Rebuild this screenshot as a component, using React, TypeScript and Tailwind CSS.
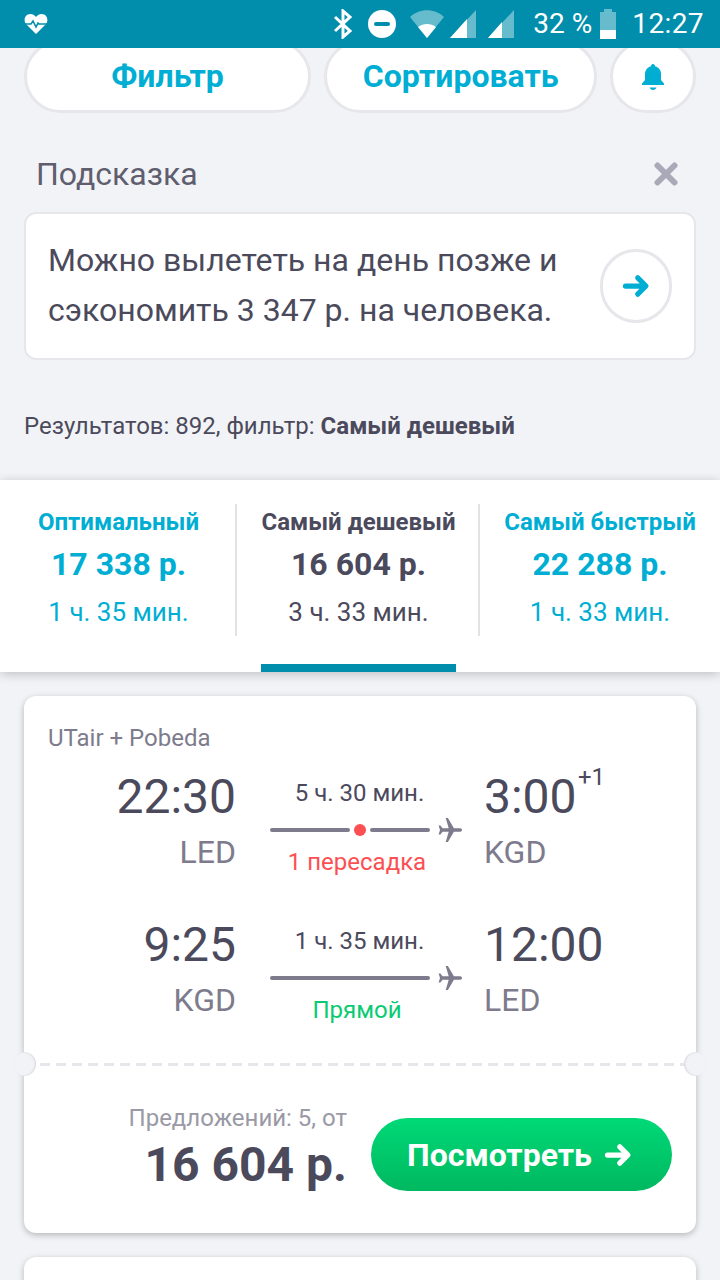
import { FC } from "react";

const Arrow: FC<{ className: string }> = ({ className }) => (
  <svg viewBox="0 0 24 24" className={className} fill="none" stroke="currentColor" strokeWidth="4.5" strokeLinecap="round" strokeLinejoin="round">
    <path d="M3 12h17M13.500 5l7 7-7 7" />
  </svg>
);

const Plane = () => (
  <svg viewBox="0 0 24 24" className="w-6 h-6 shrink-0 text-[#7d7b8c]" fill="currentColor">
    <path d="M24 12c0-1-.9-1.700-1.800-1.700h-6.300L9.900 0H7.700l3 10.300H4.600L2.400 7.600H.6L2 12 .6 16.400h1.800l2.200-2.700h6.100l-3 10.300h2.200l6-10.300h6.300c.9 0 1.800-.7 1.800-1.700z" />
  </svg>
);

function StatusBar() {
  return (
    <div className="h-12 shrink-0 bg-[#008eac] flex items-center pl-6 pr-4 text-white relative z-10">
      <svg viewBox="0 0 24 22" className="w-6 h-[22px]">
        <path fill="#fff" d="M12 21 2 11C-1 7 1 1 6.500 1 9 1 11 2.500 12 4c1-1.500 3-3 5.500-3C23 1 25 7 22 11z" />
        <path fill="none" stroke="#008eac" strokeWidth="1.600" d="M1 11h6l2-3 3 6 2-4 1 1h8" />
      </svg>
      <div className="ml-auto flex items-center">
        <svg viewBox="0 0 20 30" className="w-5 h-[30px]" fill="none" stroke="#fff" strokeWidth="3">
          <path d="M2 8l15 14-7 6V2l7 6L2 22" />
        </svg>
        <div className="ml-[15px] w-7 h-7 rounded-full bg-white flex items-center justify-center">
          <div className="w-4 h-1 rounded-full bg-[#008eac]" />
        </div>
        <svg viewBox="0 0 34 28" className="ml-[14px] w-[34px] h-7">
          <path fill="#66bbcd" d="M0 7C9-2 25-2 34 7L17 28z" />
          <path fill="#fff" d="M8 17c5-4 13-4 18 0l-9 11z" />
        </svg>
        <svg viewBox="0 0 26 28" className="ml-[6px] w-[26px] h-7">
          <path fill="#66bbcd" d="M26 0v28H0z" />
          <path fill="#fff" d="M17 9v19H0z" />
        </svg>
        <svg viewBox="0 0 26 28" className="ml-3 w-[26px] h-7">
          <path fill="#66bbcd" d="M26 0v28H0z" />
          <path fill="#fff" d="M14 12v16H0z" />
        </svg>
        <span className="ml-[19px] text-[28px] leading-none">32 %</span>
        <div className="ml-2 w-4 h-[30px] flex flex-col items-center">
          <div className="w-2 h-[3px] bg-[#66bbcd]" />
          <div className="w-4 h-[18px] bg-[#66bbcd]" />
          <div className="w-4 h-[9px] bg-white" />
        </div>
        <span className="ml-4 text-[28px] leading-none tracking-[0.4px]">12:27</span>
      </div>
    </div>
  );
}

function Tab({ title, price, time, active }: { title: string; price: string; time: string; active?: boolean }) {
  return (
    <div className={`flex-1 flex flex-col items-center ${active ? "text-[#4b4a5c]" : "text-[#00aed4]"}`}>
      <span className="text-[24px] leading-[36px] font-bold whitespace-nowrap">{title}</span>
      <span className="text-[32px] leading-[48px] font-bold whitespace-nowrap">{price}</span>
      <span className="mt-[6px] text-[26px] leading-[36px] whitespace-nowrap">{time}</span>
    </div>
  );
}

function Leg({ dep, depCode, arr, arrCode, dur, plus, stops, stopsClass, dot }: {
  dep: string; depCode: string; arr: string; arrCode: string; dur: string; plus?: string; stops: string; stopsClass: string; dot?: boolean;
}) {
  return (
    <div className="flex h-[112px]">
      <div className="w-[188px] flex flex-col items-end">
        <span className="text-[48px] leading-[60px] text-[#4b4a5c]">{dep}</span>
        <span className="mt-[1px] text-[32px] leading-[48px] text-[#7d7b8c]">{depCode}</span>
      </div>
      <div className="ml-[34px] w-[194px] flex flex-col">
        <span className="w-[179px] mt-[10px] text-center text-[24px] leading-[32px] text-[#4b4a5c]">{dur}</span>
        <div className="flex items-center mt-[8px] h-[26px]">
          <div className="w-[160px] flex items-center">
            {dot ? (
              <>
                <div className="w-[80px] h-1 rounded-full bg-[#7d7b8c]" />
                <div className="mx-[4px] w-3 h-3 rounded-full bg-[#fb4f53]" />
                <div className="w-[60px] h-1 rounded-full bg-[#7d7b8c]" />
              </>
            ) : (
              <div className="w-full h-1 rounded-full bg-[#7d7b8c]" />
            )}
          </div>
          <div className="ml-[8px]"><Plane /></div>
        </div>
        <span className={`w-[174px] mt-[3px] text-center text-[24px] leading-[32px] whitespace-nowrap ${stopsClass}`}>{stops}</span>
      </div>
      <div className="ml-5 flex flex-col items-start relative">
        <span className="text-[48px] leading-[60px] text-[#4b4a5c]">{arr}</span>
        {plus && <span className="absolute left-[94px] top-[-6px] text-[24px] leading-[32px] text-[#4b4a5c]">{plus}</span>}
        <span className="mt-[1px] text-[32px] leading-[48px] text-[#7d7b8c]">{arrCode}</span>
      </div>
    </div>
  );
}

export default function App() {
  return (
    <div className="w-[720px] h-[1280px] overflow-hidden bg-[#f2f3f6] flex flex-col font-['Roboto',sans-serif]">
      <StatusBar />

      <div className="flex mx-6 gap-[13px] -mt-[8px] h-[73px] shrink-0 text-[#00aed4] text-[32px] font-bold">
        <div className="w-[288px] pb-[2px] bg-white rounded-full border-[3px] border-[#e6e6eb] flex items-center justify-center">Фильтр</div>
        <div className="w-[274px] pb-[2px] bg-white rounded-full border-[3px] border-[#e6e6eb] flex items-center justify-center">Сортировать</div>
        <div className="w-[86px] bg-white rounded-full border-[3px] border-[#e6e6eb] flex items-center justify-center">
          <svg viewBox="0 0 24 28" className="w-6 h-7" fill="currentColor">
            <path d="M12 1c1.300 0 2 1 2 2.200C18 4.200 20 7.500 20 11v6l3 3.500V22H1v-1.500L4 17v-6c0-3.500 2-6.800 6-7.800C10 2 10.700 1 12 1z" />
            <path d="M8.500 24.500h7C15 26 13.500 27 12 27s-3-1-3.500-2.500z" />
          </svg>
        </div>
      </div>

      <div className="mt-[41px] ml-[36px] mr-[42px] flex items-center justify-between h-10 shrink-0">
        <span className="text-[32px] text-[#5f5e6e]">Подсказка</span>
        <svg viewBox="0 0 24 24" className="w-6 h-6 text-[#aaa9b7]" fill="none" stroke="currentColor" strokeWidth="6" strokeLinecap="round">
          <path d="M3.500 3.500l17 17M20.500 3.500l-17 17" />
        </svg>
      </div>

      <div className="mt-[18px] mx-6 h-[148px] shrink-0 bg-white rounded-[12px] border-2 border-[#e6e6eb] px-[22px] flex items-center justify-between">
        <p className="pb-[3px] text-[32px] leading-[50px] text-[#4b4a5c] whitespace-nowrap">
          Можно вылететь на день позже и
          <br />
          сэкономить 3 347 р. на человека.
        </p>
        <div className="w-[72px] h-[74px] rounded-full border-[3px] border-[#e6e6eb] flex items-center justify-center text-[#00aed4]">
          <Arrow className="w-7 h-7" />
        </div>
      </div>

      <p className="mt-[50px] ml-6 text-[24px] leading-[32px] text-[#4b4a5c] whitespace-nowrap shrink-0">
        Результатов: 892, фильтр: <b>Самый дешевый</b>
      </p>

      <div className="mt-[38px] h-[192px] shrink-0 bg-white shadow-[0_2px_10px_rgba(0,0,0,0.22)] relative pt-[24px] flex">
        <div className="w-[237px] h-[132px] pl-[2px] border-r-2 border-[#e2e2e6] flex"><Tab title="Оптимальный" price="17 338 р." time="1 ч. 35 мин." /></div>
        <div className="w-[243px] h-[132px] pl-[2px] border-r-2 border-[#e2e2e6] flex"><Tab title="Самый дешевый" price="16 604 р." time="3 ч. 33 мин." active /></div>
        <div className="w-[240px] h-[132px] flex"><Tab title="Самый быстрый" price="22 288 р." time="1 ч. 33 мин." /></div>
        <div className="absolute left-[261px] bottom-0 w-[195px] h-2 bg-[#008eac]" />
      </div>

      <div className="mt-6 mx-6 h-[537px] shrink-0 bg-white rounded-[12px] shadow-[0_2px_6px_rgba(0,0,0,0.25)] flex flex-col">
        <div className="h-[367px] shrink-0 flex flex-col">
          <span className="mt-6 ml-6 text-[24px] leading-[36px] text-[#7d7b8c]">UTair + Pobeda</span>
          <div className="mt-[11px] ml-[24px] flex flex-col gap-[36px]">
            <Leg dep="22:30" depCode="LED" arr="3:00" arrCode="KGD" plus="+1" dur="5 ч. 30 мин." stops="1 пересадка" stopsClass="text-[#fb4f53]" dot />
            <Leg dep="9:25" depCode="KGD" arr="12:00" arrCode="LED" dur="1 ч. 35 мин." stops="Прямой" stopsClass="text-[#0acb72]" />
          </div>
        </div>

        <div className="relative h-[3px] shrink-0 bg-[repeating-linear-gradient(90deg,#e6e6eb_0,#e6e6eb_10px,transparent_10px,transparent_16px)]">
          <div className="absolute left-[-12px] top-[-11px] w-6 h-6 rounded-full bg-[#f2f3f6] shadow-[inset_-1px_0_2px_rgba(0,0,0,0.12)]" />
          <div className="absolute right-[-12px] top-[-11px] w-6 h-6 rounded-full bg-[#f2f3f6] shadow-[inset_1px_0_2px_rgba(0,0,0,0.12)]" />
        </div>

        <div className="mt-[52px] mr-6 flex items-start justify-end">
          <div className="-mt-4 flex flex-col items-end">
            <span className="text-[24px] leading-[32px] text-[#9a99a6] whitespace-nowrap">Предложений: 5, от</span>
            <span className="mt-[3px] text-[48px] leading-[56px] font-bold text-[#4b4a5c] whitespace-nowrap">16 604 р.</span>
          </div>
          <div className="ml-6 pr-1 w-[301px] h-[73px] rounded-full bg-gradient-to-b from-[#00d977] to-[#00b860] flex items-center justify-center text-white text-[32px] font-bold whitespace-nowrap">
            Посмотреть
            <Arrow className="ml-[12px] w-7 h-7" />
          </div>
        </div>
      </div>

      <div className="mt-6 mx-6 h-[60px] shrink-0 bg-white rounded-[12px] shadow-[0_2px_6px_rgba(0,0,0,0.25)]" />
    </div>
  );
}
